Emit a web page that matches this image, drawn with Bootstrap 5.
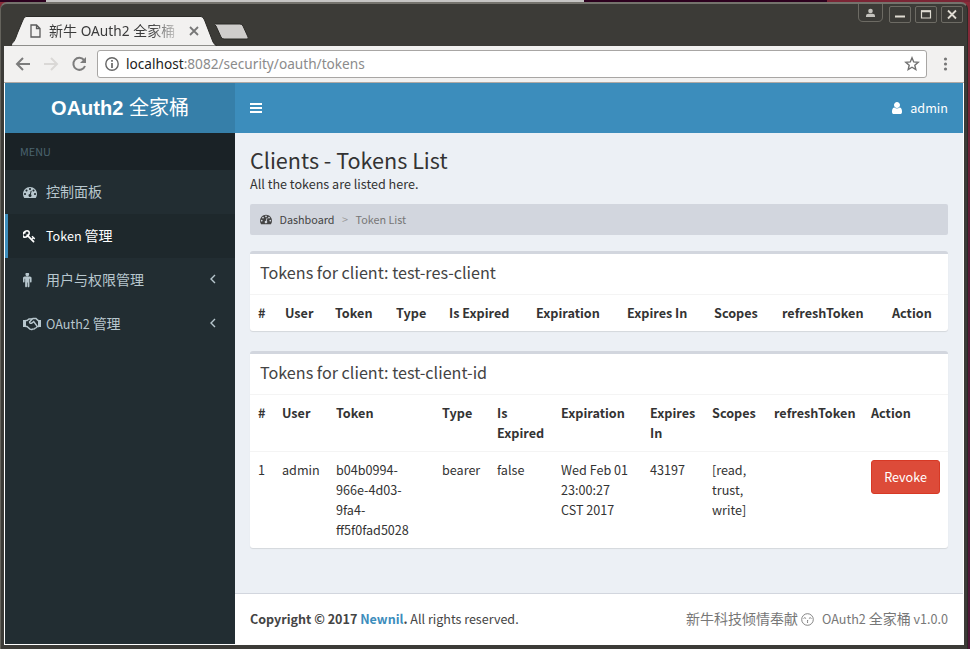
<!DOCTYPE html>
<html lang="zh-CN">
<head>
<meta charset="utf-8">
<title>新牛 OAuth2 全家桶</title>
<link rel="stylesheet" href="https://cdn.jsdelivr.net/npm/bootstrap@5.3.0/dist/css/bootstrap.min.css">
<style>
html,body{height:649px;overflow:hidden}
body{width:970px;font-family:"Noto Sans CJK SC",sans-serif;font-size:12.6px;line-height:20px;color:#333;background:linear-gradient(#8a2b38,#5a1a35 40%,#501738)}
svg{display:block;flex:none}
.desk-strip{height:2px;background:linear-gradient(90deg,#2c001e 46px,#c6c5c4 46px 584px,#2c001e 584px 827px,#7b2535 827px)}
.desk-wrap{height:649px}
.win{width:968px;height:647px;background:#3c3b37;border-top:2px solid #75736d;border-left:1px solid #65635c;border-right:1px solid #2b2b27;border-radius:7px 7px 0 0;padding:0 3px 5px 3px}
.titlebar{height:42px;padding-left:7px}
.tab-shape{width:207px;height:31px;margin-top:11px}
.tab-shape>svg.shape{position:absolute;left:0;top:0}
.tab-shape>.tab-inner{position:relative;height:30px;padding:2px 0 0 19px}
.tab-title{width:127px;overflow:hidden;white-space:nowrap;font-family:"Noto Sans","Noto Sans CJK SC",sans-serif;font-size:14px;margin-left:8px;color:#3b3b3b;-webkit-mask-image:linear-gradient(90deg,#000 80%,rgba(0,0,0,.2))}
.tab-title span{font-size:13.7px}
.tab-close{margin-left:9px}
.new-tab{margin-top:15px;margin-left:-3px}
.tool{height:37px;background:#f2f1f0;border-bottom:1px solid #b0a9a4;padding:0 12px 0 11px}
.omni{height:28px;border:1px solid #a8a6a4;border-radius:3px;background:#fff;width:830px;margin-left:9px;padding:0 6px 0 7px;font-family:"Noto Sans",sans-serif;font-size:13.65px;color:#8b8b8b}
.url{margin-left:7px}
.reload{margin-left:-4px}
.omni b{font-weight:400;color:#222}
.win-ctls{margin-right:-3px}
.ctl{width:22px;height:17px;border:1px solid #6d6b64;border-radius:2px;margin:2px 0 0 4px}
.win-ctls .ctl:first-child{margin-left:6px}
.viewport{width:960px;height:562px;border:solid #fff;border-width:0 1px 1px;}
.side{width:230px;background:#222d32}
.logo{height:50px;background:#367fa9;color:#fff;font:700 20px/50px "Liberation Sans","Noto Sans CJK SC",sans-serif}
.logo span{font-weight:400}
.menu-head{height:37px;padding-left:15px;font-size:10.8px;line-height:37px;color:#4b646f;background:#1a2226}
.side .nav-link{height:44px;color:#b8c7ce;border-left:3px solid transparent;padding:0 18px 2px 15px;font-size:14px;border-radius:0}
.side .nav-link.active{background:#1e282c;color:#fff;border-left-color:#3c8dbc}
.side .ic{width:20px;margin-right:3px;padding-top:2px}
.lat{font-size:12.6px}
.top{height:50px;background:#3c8dbc;color:#fff;padding:0 15px}
.user-name{margin-left:6px}
.main-area{background:#ecf0f5;height:460px;padding:14px 15px 0}
.main-area h1{font-size:21.6px;line-height:26px;font-weight:400;margin:0}
.sub{line-height:20px;margin-top:1px}
.crumbs{height:31px;margin-top:10px;background:#d2d6de;border-radius:2px;padding:0 10px 1px;font-size:10.8px;color:#777}
.crumbs .home{color:#444;margin-left:7.5px}
.crumbs .gt{color:#999;margin:0 7.5px}
.panel{background:#fff;border-top:3px solid #d2d6de;border-radius:3px;box-shadow:0 1px 1px rgba(0,0,0,.1)}
.panel+.panel{margin-top:20px}
.panel h2{height:40px;font-size:16.16px;line-height:37px;padding:0 10px;margin:0;color:#444;font-weight:400}
.panel table{table-layout:fixed;width:698px;margin:0;color:#333}
.panel td,.panel th{padding:8px;vertical-align:top;border-top:1px solid #f4f4f4;text-align:left;white-space:nowrap;line-height:20px}
.panel th{font-size:12.65px}
.btn-revoke{background:#dd4b39;border:1px solid #d73925;color:#fff;border-radius:3px;height:34px;width:69px;padding:0;font-size:12.6px;line-height:20px}
.foot{height:51px;background:#fff;border-top:1px solid #d2d6de;padding:0 15px;color:#444;font-size:12.55px}
.foot a{color:#3c8dbc;text-decoration:none}
.credit{color:#777;font-size:14px;padding-bottom:2px}
.smile{margin:3px 0 0 3px}
</style>
</head>
<body>
<svg width="0" height="0" class="position-absolute"><defs>
<path id="i-tach" d="M384 1152q0-53-37.5-90.5t-90.5-37.5-90.5 37.5-37.5 90.5 37.5 90.5 90.5 37.5 90.5-37.5 37.5-90.5zm192-448q0-53-37.5-90.5t-90.5-37.5-90.5 37.5-37.5 90.5 37.5 90.5 90.5 37.5 90.5-37.5 37.5-90.5zm428 481l101-382q6-26-7.5-48.5t-38.5-29.5-48 6.500-30 39.500l-101 382q-60 5-107 43.500t-63 98.500q-20 77 20 146t117 89 146-20 89-117q16-60-6-117t-72-91zm660-33q0-53-37.500-90.500t-90.500-37.500-90.500 37.500-37.500 90.500 37.500 90.500 90.500 37.500 90.500-37.500 37.500-90.500zm-640-640q0-53-37.500-90.500t-90.500-37.500-90.500 37.500-37.500 90.500 37.500 90.500 90.500 37.500 90.500-37.500 37.500-90.500zm448 192q0-53-37.500-90.500t-90.500-37.500-90.500 37.500-37.500 90.500 37.500 90.500 90.500 37.500 90.500-37.500 37.500-90.500zm320 448q0 261-141 483-19 29-54 29h-1402q-35 0-54-29-141-221-141-483 0-182 71-348t191-286 286-191 348-71 348 71 286 191 191 286 71 348z"/>
</defs></svg>
<div class="desk-wrap">
<div class="desk-strip"></div>
<div class="win">
  <div class="titlebar d-flex">
    <div class="tab-shape position-relative">
      <svg class="shape" width="207" height="31"><path d="M0 31L1 28.500C4 26 5 22 6.500 18L11.500 6Q13 1.500 15 1.500H190Q192 1.500 193.500 5L202 27Q203.500 30 206 31Z" fill="#f2f1f0" stroke="#2b2a27" stroke-width="1"/></svg>
      <div class="tab-inner d-flex align-items-center">
        <svg width="11" height="14" fill="none" stroke="#5b5b5b" stroke-width="1.300"><path d="M1 1H6.500L10 4.500V13H1ZM6.500 1V4.500H10"/></svg>
        <div class="tab-title">新牛 <span>OAuth2</span> 全家桶</div>
        <svg class="tab-close" width="18" height="10" stroke="#777" stroke-width="1.800"><path d="M5 1l8 8M13 1l-8 8"/></svg>
      </div>
    </div>
    <svg class="new-tab" width="36" height="30"><path d="M-4 5H22Q24 5 25 7L30 18Q31 20 29 20H6Q4 20 3 18L-2 7Z" transform="translate(3 0)" fill="#cfcdcb" stroke="#2b2a27"/></svg>
    <div class="win-ctls ms-auto d-flex pe-1">
      <svg width="25" height="19" fill="none" stroke="#6d6b64"><path d="M.5 0V13Q.5 17.500 5 17.500H20Q24.500 17.500 24.500 13V0"/><g fill="#c4c2bd" stroke="none"><circle cx="12.500" cy="7" r="2.300"/><path d="M8 13V11.500Q8 9.800 10.500 9.800H14.500Q17 9.800 17 11.500V13Z"/></g></svg>
      <div class="d-flex">
        <svg class="ctl" viewBox="0 0 20 15"><path d="M5 9.500h10" stroke="#dfdbd2" stroke-width="2"/></svg>
        <svg class="ctl" viewBox="0 0 20 15"><path d="M5.500 4H14.500V11H5.500Z" fill="none" stroke="#dfdbd2" stroke-width="1.200"/><path d="M5 4.200h10" stroke="#dfdbd2" stroke-width="2"/></svg>
        <svg class="ctl" viewBox="0 0 20 15"><path d="M6 3.500l8 8M14 3.500l-8 8" stroke="#dfdbd2" stroke-width="1.800"/></svg>
      </div>
    </div>
  </div>
  <div class="tool d-flex align-items-center">
    <svg width="16" height="14" fill="none" stroke="#7c7c7c" stroke-width="2"><path d="M15 7H2M8 1L2 7l6 6"/></svg>
    <svg class="ms-2 me-2" width="28" height="14" fill="none" stroke="#dad8d6" stroke-width="2"><path d="M5 7H18M12 1l6 6-6 6"/></svg>
    <svg class="reload" width="17" height="16" fill="none" stroke="#7c7c7c" stroke-width="2"><path d="M13 4A6 6 0 1 0 14 10"/><path d="M15 1V7H9Z" fill="#7c7c7c" stroke="none"/></svg>
    <div class="omni d-flex align-items-center">
      <svg width="14" height="14" fill="none" stroke="#666" stroke-width="1.400"><circle cx="7" cy="7" r="6.200"/><path d="M7 6v5M7 3v1.700" stroke-width="1.700"/></svg>
      <div class="url"><b>localhost</b>:8082/security/oauth/tokens</div>
      <svg class="ms-auto" width="16" height="16" viewBox="0 0 16 16" fill="none" stroke="#717171" stroke-width="1.400"><path d="M8 1.800l1.700 4.100 4.500.4-3.400 2.900 1 4.300L8 11.200l-3.800 2.300 1-4.300L1.800 6.300l4.500-.4z"/></svg>
    </div>
    <svg class="ms-auto" width="12" height="16" fill="#777"><circle cx="5.500" cy="3" r="1.600"/><circle cx="5.500" cy="8" r="1.600"/><circle cx="5.500" cy="13" r="1.600"/></svg>
  </div>
  <div class="viewport d-flex">
    <aside class="side flex-shrink-0">
      <div class="logo text-center">OAuth2 <span>全家桶</span></div>
      <div class="menu-head">MENU</div>
      <nav class="nav flex-column">
        <a class="nav-link d-flex align-items-center"><span class="ic"><svg width="14" height="14" viewBox="0 0 1792 1792" fill="currentColor"><use href="#i-tach"/></svg></span>控制面板</a>
        <a class="nav-link active d-flex align-items-center"><span class="ic"><svg width="14" height="14" viewBox="128 0 1792 1792" fill="currentColor"><path d="M832 512q0-80-56-136t-136-56-136 56-56 136q0 42 19 83-41-19-83-19-80 0-136 56t-56 136 56 136 136 56 136-56 56-136q0-42-19-83 41 19 83 19 80 0 136-56t56-136zm851 704q0 17-49 66t-66 49q-9 0-28.500-16t-36.500-33-38.500-40-24.500-26l-96 96 220 220q28 28 28 68 0 42-39 81t-81 39q-40 0-68-28l-671-671q-176 131-365 131-163 0-265.500-102.500t-102.500-265.500q0-160 95-313t248-248 313-95q163 0 265.500 102.500t102.500 265.500q0 189-131 365l355 355 96-96q-3-3-26-24.500t-40-38.500-33-36.500-16-28.500q0-17 49-66t66-49q13 0 23 10 6 6 46 44.500t82 79.500 86.500 86 73 78 28.500 41z"/></svg></span><span><span class="lat">Token </span>管理</span></a>
        <a class="nav-link d-flex align-items-center"><span class="ic"><svg width="15" height="15" viewBox="384 0 1792 1792" fill="currentColor"><path d="M1408 608v416q0 40-28 68t-68 28-68-28-28-68v-352h-64v912q0 46-33 79t-79 33-79-33-33-79v-464h-64v464q0 46-33 79t-79 33-79-33-33-79v-912h-64v352q0 40-28 68t-68 28-68-28-28-68v-416q0-80 56-136t136-56h640q80 0 136 56t56 136zm-288-448q0 93-65.500 158.500t-158.500 65.500-158.500-65.500-65.500-158.500 65.500-158.500 158.500-65.500 158.500 65.500 65.500 158.500z"/></svg></span>用户与权限管理<svg class="ms-auto" width="8" height="10" fill="none" stroke="currentColor" stroke-width="1.400"><path d="M6 1L2 5l4 4"/></svg></a>
        <a class="nav-link d-flex align-items-center"><span class="ic"><svg width="18" height="14" viewBox="0 0 18 14" fill="none" stroke="currentColor" stroke-width="1.400"><path d="M0 3v7h3V3zM18 3v7h-3V3z" fill="currentColor" stroke="none"/><path d="M2.500 3.500H4L6 2h3l1-.5h3l2 2h1M2.500 9.500H4l3 2.600q1.500.8 2.500 0 2 .3 2.700-1 1.600-.1 1.800-1.600h2"/><path d="M9.200 2L6.500 5q.3 2 2.500 1l1.700-1.500L14 9"/></svg></span><span><span class="lat">OAuth2 </span>管理</span><svg class="ms-auto" width="8" height="10" fill="none" stroke="currentColor" stroke-width="1.400"><path d="M6 1L2 5l4 4"/></svg></a>
      </nav>
    </aside>
    <div class="flex-grow-1">
      <header class="top d-flex align-items-center justify-content-between">
        <svg width="12" height="12" fill="#fff"><path d="M0 1h12v2H0zM0 5h12v2H0zM0 9h12v2H0z"/></svg>
        <div class="d-flex align-items-center"><svg width="14" height="14" viewBox="0 0 1792 1792" fill="#fff"><path d="M1536 1399q0 109-62.500 187t-150.500 78h-854q-88 0-150.500-78t-62.500-187q0-85 8.500-160.500t31.500-152 58.500-131 94-89 134.500-34.500q131 128 313 128t313-128q76 0 134.500 34.500t94 89 58.500 131 31.500 152 8.500 160.500zm-256-887q0 159-112.500 271.500t-271.500 112.500-271.500-112.500-112.500-271.500 112.500-271.500 271.500-112.500 271.500 112.500 112.500 271.500z"/></svg><span class="user-name">admin</span></div>
      </header>
      <main class="main-area">
        <h1>Clients - Tokens List</h1>
        <div class="sub">All the tokens are listed here.</div>
        <div class="crumbs d-flex align-items-center"><svg width="12" height="12" viewBox="0 0 1792 1792" fill="#444"><use href="#i-tach"/></svg><span class="home">Dashboard</span><span class="gt">&gt;</span><span>Token List</span></div>
        <section class="panel mt-3">
          <h2>Tokens for client: test-res-client</h2>
          <table>
            <colgroup><col width="27"><col width="50"><col width="61"><col width="53"><col width="87"><col width="91"><col width="87"><col width="68"><col width="110"><col width="64"></colgroup>
            <tr><th>#</th><th>User</th><th>Token</th><th>Type</th><th>Is Expired</th><th>Expiration</th><th>Expires In</th><th>Scopes</th><th>refreshToken</th><th>Action</th></tr>
          </table>
        </section>
        <section class="panel">
          <h2>Tokens for client: test-client-id</h2>
          <table>
            <colgroup><col width="24"><col width="54"><col width="106"><col width="55"><col width="64"><col width="89"><col width="62"><col width="62"><col width="97"><col width="85"></colgroup>
            <tr><th>#</th><th>User</th><th>Token</th><th>Type</th><th>Is<br>Expired</th><th>Expiration</th><th>Expires<br>In</th><th>Scopes</th><th>refreshToken</th><th>Action</th></tr>
            <tr><td>1</td><td>admin</td><td>b04b0994-<br>966e-4d03-<br>9fa4-<br>ff5f0fad5028</td><td>bearer</td><td>false</td><td>Wed Feb 01<br>23:00:27<br>CST 2017</td><td>43197</td><td>[read,<br>trust,<br>write]</td><td></td><td><button class="btn btn-revoke">Revoke</button></td></tr>
          </table>
        </section>
      </main>
      <footer class="foot d-flex align-items-center justify-content-between">
        <div><strong>Copyright © 2017 <a href="#">Newnil</a>.</strong> All rights reserved.</div>
        <div class="credit d-flex align-items-center">新牛科技倾情奉献<svg class="smile" width="13" height="13" viewBox="0 0 13 13" fill="none" stroke="#777" stroke-width=".9"><circle cx="6.500" cy="6.500" r="5.800"/><path d="M2.500 5.500q1.200-1.600 2.600 0M7.900 5.500q1.200-1.600 2.600 0M6 7.300q1.800.3.400 1.200 1.500.5-.4 1.300"/></svg><span class="ms-2"><span class="lat">OAuth2 </span>全家桶<span class="lat"> v1.0.0</span></span></div>
      </footer>
    </div>
  </div>
</div>
</div>
<script src="https://cdn.jsdelivr.net/npm/bootstrap@5.3.0/dist/js/bootstrap.bundle.min.js"></script>
</body>
</html>
